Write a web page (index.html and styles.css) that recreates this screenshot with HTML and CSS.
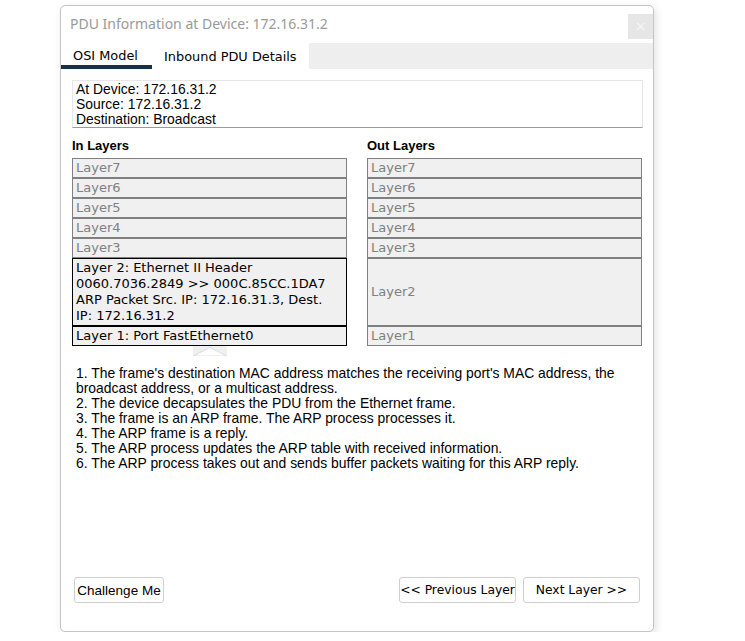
FILE: index.html
```html
<!DOCTYPE html>
<html>
<head>
<meta charset="utf-8">
<link rel="stylesheet" href="styles.css">
</head>
<body>
<div class="dialog">
  <div class="titlebar">
    <span class="title">PDU Information at Device: 172.16.31.2</span>
    <span class="close">×</span>
  </div>
  <div class="tabs">
    <span class="tab active">OSI Model</span>
    <span class="tab">Inbound PDU Details</span>
  </div>
  <div class="content">
    <div class="info">
      <div>At Device: 172.16.31.2</div>
      <div>Source: 172.16.31.2</div>
      <div>Destination: Broadcast</div>
    </div>
    <div class="layers">
      <div class="heading">In Layers</div>
      <div class="heading">Out Layers</div>
      <div class="layer">Layer7</div>
      <div class="layer">Layer7</div>
      <div class="layer">Layer6</div>
      <div class="layer">Layer6</div>
      <div class="layer">Layer5</div>
      <div class="layer">Layer5</div>
      <div class="layer">Layer4</div>
      <div class="layer">Layer4</div>
      <div class="layer">Layer3</div>
      <div class="layer">Layer3</div>
      <div class="layer on tall">Layer 2: Ethernet II Header<br>0060.7036.2849 &gt;&gt; 000C.85CC.1DA7<br>ARP Packet Src. IP: 172.16.31.3, Dest.<br>IP: 172.16.31.2</div>
      <div class="layer tall mid">Layer2</div>
      <div class="layer on">Layer 1: Port FastEthernet0</div>
      <div class="layer">Layer1</div>
      <div class="arrowcell">
        <svg class="arrow" width="34" height="10" viewBox="0 0 34 10">
          <rect x="0" y="0" width="34" height="10" fill="#f0f0f0"/>
          <polygon points="0,10 17,1.5 34,10" fill="#ffffff" stroke="#dcdcdc" stroke-width="1"/>
        </svg>
      </div>
    </div>
    <div class="desc">
      <div>1. The frame's destination MAC address matches the receiving port's MAC address, the broadcast address, or a multicast address.</div>
      <div>2. The device decapsulates the PDU from the Ethernet frame.</div>
      <div>3. The frame is an ARP frame. The ARP process processes it.</div>
      <div>4. The ARP frame is a reply.</div>
      <div>5. The ARP process updates the ARP table with received information.</div>
      <div>6. The ARP process takes out and sends buffer packets waiting for this ARP reply.</div>
    </div>
    <div class="buttons">
      <button class="btn challenge">Challenge Me</button>
      <div class="nav">
        <button class="btn navbtn">&lt;&lt; Previous Layer</button>
        <button class="btn navbtn">Next Layer &gt;&gt;</button>
      </div>
    </div>
  </div>
</div>
</body>
</html>
```
FILE: styles.css
```css
html, body {
  margin: 0;
  padding: 0;
  background: #ffffff;
}
body {
  font-family: "Liberation Sans", Arial, sans-serif;
  font-size: 13.9px;
  color: #000;
}
.dialog {
  box-sizing: border-box;
  margin: 5px 0 0 60px;
  width: 594px;
  height: 627px;
  border: 1px solid #c4c4c4;
  border-radius: 5px;
  box-shadow: 2px 3px 9px rgba(0, 0, 0, 0.12);
  display: flex;
  flex-direction: column;
  background: #fff;
}
.titlebar {
  height: 37px;
  display: flex;
  align-items: flex-start;
  justify-content: space-between;
  padding: 0 0 0 9px;
}
.title {
  font-family: "Noto Sans", sans-serif;
  font-size: 14px;
  color: #9a9a9a;
  line-height: 20px;
  margin-top: 8px;
}
.close {
  width: 25px;
  height: 25px;
  margin-top: 8px;
  background: #e6e6e6;
  color: #f6f6f6;
  font-family: "DejaVu Sans", sans-serif;
  font-size: 14px;
  line-height: 24px;
  text-align: center;
}
.tabs {
  height: 26px;
  background: #eeeeee;
  display: flex;
}
.tab {
  box-sizing: border-box;
  height: 26px;
  padding: 0 12px;
  background: #fff;
  font-family: "DejaVu Sans", sans-serif;
  font-size: 12.9px;
  line-height: 27px;
  color: #000;
}
.tab.active {
  border-bottom: 4px solid #15304c;
  line-height: 25px;
  width: 91px;
}
.content {
  flex: 1;
  display: flex;
  flex-direction: column;
  padding: 11px 10px 28px 11px;
}
.info {
  box-sizing: border-box;
  height: 48px;
  border: 1px solid #e6e6e6;
  border-bottom: 1px solid #9a9a9a;
  padding: 1px 3px 0 3px;
  line-height: 15px;
}
.layers {
  margin-top: 10px;
  display: grid;
  grid-template-columns: 275px 275px;
  column-gap: 20px;
}
.heading {
  font-size: 13px;
  font-weight: bold;
  line-height: 15px;
  margin-bottom: 5px;
}
.layer {
  box-sizing: border-box;
  border: 1px solid #808080;
  background: #f0f0f0;
  color: #808080;
  font-family: "DejaVu Sans", sans-serif;
  font-size: 13px;
  line-height: 18px;
  height: 20px;
  padding: 0 3px;
}
.layer.on {
  border-color: #000;
  color: #000;
  line-height: 16px;
  padding: 1px 3px;
}
.layer.tall {
  height: 68px;
}
.layer.mid {
  display: flex;
  align-items: center;
}
.arrowcell {
  grid-column: 1;
  height: 10px;
  display: flex;
  justify-content: center;
}
.arrow {
  display: block;
}
.desc {
  margin-top: 10px;
  padding: 0 4px;
  line-height: 15px;
}
.buttons {
  margin-top: auto;
  display: flex;
  justify-content: space-between;
  padding: 0 3px 0 2px;
}
.nav {
  display: flex;
  gap: 7px;
}
.btn {
  box-sizing: border-box;
  height: 26px;
  background: #fff;
  border: 1px solid #cfcfcf;
  border-radius: 3px;
  padding: 0;
  color: #000;
  white-space: nowrap;
  cursor: default;
}
.challenge {
  width: 90px;
  font-family: "Liberation Sans", Arial, sans-serif;
  font-size: 13.5px;
}
.navbtn {
  width: 117px;
  font-family: "DejaVu Sans", sans-serif;
  font-size: 12.3px;
}
```
